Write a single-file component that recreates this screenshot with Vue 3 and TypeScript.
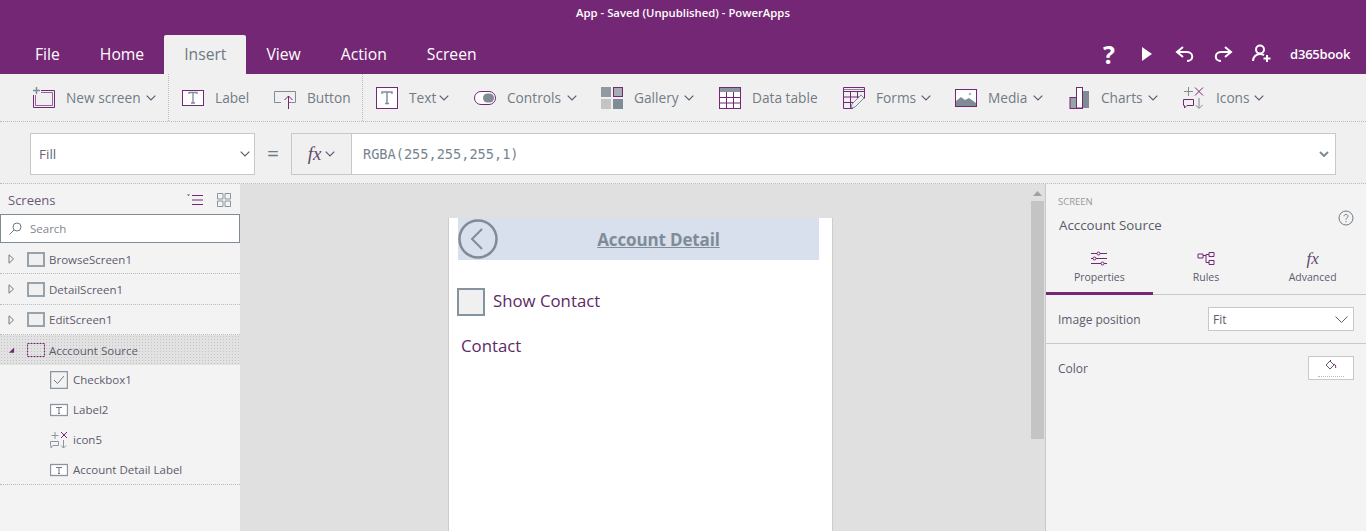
<script setup lang="ts">
interface RibbonItem {
  name: string;
  icon: string;
  w: number;
  chevron: boolean;
  gap: number;
}

const tabs = ['File', 'Home', 'Insert', 'View', 'Action', 'Screen'];

const ribbon: RibbonItem[] = [
  { name: 'New screen', icon: 'newscreen', w: 75, chevron: true, gap: 26 },
  { name: 'Label', icon: 'label', w: 35, chevron: false, gap: 24 },
  { name: 'Button', icon: 'button', w: 43, chevron: false, gap: 26 },
  { name: 'Text', icon: 'text', w: 25, chevron: true, gap: 25 },
  { name: 'Controls', icon: 'controls', w: 55, chevron: true, gap: 24 },
  { name: 'Gallery', icon: 'gallery', w: 45, chevron: true, gap: 25 },
  { name: 'Data table', icon: 'datatable', w: 66, chevron: false, gap: 25 },
  { name: 'Forms', icon: 'forms', w: 40, chevron: true, gap: 24 },
  { name: 'Media', icon: 'media', w: 40, chevron: true, gap: 25 },
  { name: 'Charts', icon: 'charts', w: 42, chevron: true, gap: 25 },
  { name: 'Icons', icon: 'icons', w: 33, chevron: true, gap: 0 },
];

const screens = ['BrowseScreen1', 'DetailScreen1', 'EditScreen1'];
const children = [
  { name: 'Checkbox1', icon: 'check' },
  { name: 'Label2', icon: 'label' },
  { name: 'icon5', icon: 'icons' },
  { name: 'Account Detail Label', icon: 'label' },
];
</script>

<template>
  <div class="app">
    <header class="top">
      <div class="title">App - Saved (Unpublished) - PowerApps</div>
      <div class="menu">
        <nav class="tabs">
          <span v-for="t in tabs" :key="t" class="tab" :class="{ active: t === 'Insert' }">{{ t }}</span>
        </nav>
        <div class="actions">
          <span class="question">?</span>
          <svg class="play" width="14" height="16" viewBox="0 0 14 16"><path d="M2 1l10 7-10 7z" fill="#fff" /></svg>
          <svg width="20" height="18" viewBox="0 0 20 18" fill="none" stroke="#fff" stroke-width="2"><path d="M8 2L2 7l6 5M2 7h10c7 0 7 9 0 9" /></svg>
          <svg width="20" height="18" viewBox="0 0 20 18" fill="none" stroke="#fff" stroke-width="2"><path d="M12 2l6 5-6 5M18 7H8c-7 0-7 9 0 9" /></svg>
          <svg width="20" height="19" viewBox="0 0 20 19" fill="none" stroke="#fff" stroke-width="2"><circle cx="9" cy="5.5" r="4" /><path d="M2 17c0-4 3-7 7-7 1.5 0 3 .5 4 1.3M16 11v7M12.5 14.5h7" /></svg>
          <span class="user">d365book</span>
        </div>
      </div>
    </header>

    <div class="ribbon">
      <div
        v-for="item in ribbon"
        :key="item.name"
        class="rb-item"
        :class="{ split: item.name === 'New screen' || item.name === 'Button' }"
        :style="{ marginRight: item.gap + 'px' }"
      >
        <svg class="rb-icon" width="22" height="22" viewBox="0 0 22 22" fill="none" stroke="#742774" stroke-width="1">
          <template v-if="item.icon === 'newscreen'">
            <path d="M8 3.5h13.5v17H.5V8" />
            <path d="M8 5.500h11.500v13h-17V8" stroke-opacity=".7" />
            <path d="M3.500 0v7M0 3.500h7" stroke="#7f8c96" stroke-width="1.500" />
          </template>
          <template v-else-if="item.icon === 'label'">
            <rect x=".5" y="3.5" width="21" height="15" fill="#fff" />
            <path d="M7 7V5.500h8V7M11 6v10M9 16h4" stroke="#7f8c96" stroke-width="1.300" />
          </template>
          <template v-else-if="item.icon === 'button'">
            <path d="M7 15.500H.5v-11h21v11H15" stroke="#7f8c96" />
            <path d="M14.500 22V9M10.500 13l4-4 4 4" />
          </template>
          <template v-else-if="item.icon === 'text'">
            <rect x=".5" y=".5" width="21" height="21" fill="#fff" />
            <path d="M6 7V5h10v2M11 5v11M9 16.500h4" stroke="#7f8c96" stroke-width="1.400" />
          </template>
          <template v-else-if="item.icon === 'controls'">
            <rect x=".5" y="4.500" width="21" height="13" rx="6.500" fill="#fff" />
            <rect x="9" y="6.500" width="11" height="9" rx="4.500" fill="#7f8c96" stroke="none" />
          </template>
          <template v-else-if="item.icon === 'gallery'">
            <rect x="0" y="0" width="10" height="10" fill="#8f9aa2" stroke="none" />
            <rect x="12.500" y=".5" width="9" height="9" fill="#a6adb2" />
            <rect x="0" y="12" width="10" height="10" fill="#c4c4c4" stroke="none" />
            <rect x="12" y="12" width="10" height="10" fill="#7f8c96" stroke="none" />
          </template>
          <template v-else-if="item.icon === 'datatable'">
            <rect x=".5" y=".5" width="21" height="21" fill="#fff" />
            <rect x="1" y="1" width="20" height="4" fill="#8a959e" stroke="none" />
            <path d="M1 10.500h20M1 16h20M7.500 5v16M14.500 5v16" />
          </template>
          <template v-else-if="item.icon === 'forms'">
            <path d="M10 21.500H.5V.5h21v11M1 4.500h20M1 10h17M1 15.500h9M7.500 5v16M14.500 5v6" />
            <path d="M8 21l1-4L18 8l3 3-9 9zM1 2.500h20" stroke="#7f8c96" fill="#f0f0f0" />
          </template>
          <template v-else-if="item.icon === 'media'">
            <rect x=".5" y="2.500" width="21" height="17" fill="#fff" />
            <path d="M1 19v-5l5-4 4 3 4-2 7 5v3z" fill="#7f8c96" stroke="none" />
            <circle cx="15" cy="7" r="1.300" fill="#b4bbc0" stroke="none" />
          </template>
          <template v-else-if="item.icon === 'charts'">
            <rect x="2" y="10" width="6" height="11" fill="#98a2aa" stroke="none" />
            <rect x="8.500" y=".5" width="6" height="20.500" fill="#fff" />
            <rect x="15" y="4" width="6" height="17" fill="#7f8c96" stroke="none" />
            <path d="M2 21.500h13M2 10.500h6M2 10v12" />
          </template>
          <template v-else-if="item.icon === 'icons'">
            <path d="M5.500 0v9M1 4.500h9" stroke="#7f8c96" />
            <path d="M12 .5l8 8M20 .5l-8 8" />
            <path d="M.5 12.500h10v6H4l-2.500 2.500v-2.500h-1z" />
            <path d="M16 11v10M12.500 18l3.500 3.500 3.500-3.500" stroke="#7f8c96" />
          </template>
        </svg>
        <span class="rb-text" :style="{ width: item.w + 'px' }">{{ item.name }}</span>
        <svg v-if="item.chevron" class="chev" width="10" height="6" viewBox="0 0 10 6" fill="none" stroke="#5f5a6e" stroke-width="1.200"><path d="M.7.7L5 5l4.300-4.300" /></svg>
      </div>
    </div>

    <div class="formula">
      <div class="prop">
        <span>Fill</span>
        <svg width="10" height="6" viewBox="0 0 10 6" fill="none" stroke="#5f5a6e" stroke-width="1.200"><path d="M.7.7L5 5l4.300-4.300" /></svg>
      </div>
      <span class="equals">=</span>
      <div class="fx-box">
        <div class="fx"><i>fx</i><svg width="10" height="6" viewBox="0 0 10 6" fill="none" stroke="#5f5a6e" stroke-width="1.200"><path d="M.7.7L5 5l4.300-4.300" /></svg></div>
        <div class="expr">
          <span>RGBA(255,255,255,1)</span>
          <svg width="10" height="6" viewBox="0 0 10 6" fill="none" stroke="#7f8c96" stroke-width="2"><path d="M1 1l4 4 4-4" /></svg>
        </div>
      </div>
    </div>

    <main class="body">
      <aside class="left">
        <div class="left-head">
          <span>Screens</span>
          <div class="left-tools">
            <svg width="16" height="12" viewBox="0 0 16 12" fill="none" stroke="#742774"><path d="M5 1.500h11M5 6h11M5 10.500h11" /><path d="M0 .5h3L1.500 2z" fill="#742774" stroke="none" /></svg>
            <svg width="14" height="14" viewBox="0 0 14 14" fill="none" stroke="#8a959e"><path d="M.5.500h5.500v5.500H.5zM8 .5h5.500v5.500H8zM.5 8h5.500v5.500H.5zM8 8h5.500v5.500H8z" /></svg>
          </div>
        </div>
        <div class="search">
          <svg width="13" height="13" viewBox="0 0 13 13" fill="none" stroke="#6f7a84"><circle cx="8" cy="5" r="4" /><path d="M5 8l-4.500 4.500" /></svg>
          <span>Search</span>
        </div>
        <div v-for="s in screens" :key="s" class="row">
          <svg class="tri" width="6" height="10" viewBox="0 0 6 10" fill="none" stroke="#6f7a84"><path d="M.5.800L5 5 .5 9.200z" /></svg>
          <svg width="18" height="15" viewBox="0 0 18 15" fill="#f0f0f0" stroke="#98a2aa" stroke-width="2"><rect x="1" y="1" width="16" height="13" /></svg>
          <span>{{ s }}</span>
        </div>
        <div class="row selected">
          <svg class="tri" width="8" height="8" viewBox="0 0 8 8"><path d="M7 1v6H1z" fill="#742774" /></svg>
          <svg width="18" height="14" viewBox="0 0 18 14" fill="none" stroke="#742774"><rect x=".5" y=".5" width="17" height="13" stroke-dasharray="2 1" /></svg>
          <span>Acccount Source</span>
        </div>
        <div class="kids">
          <div v-for="c in children" :key="c.name" class="kid">
            <svg width="18" height="18" viewBox="0 0 18 18" fill="none" stroke="#8a959e">
              <template v-if="c.icon === 'check'">
                <rect x=".5" y=".5" width="17" height="17" stroke-width="1.500" />
                <path d="M4 9l3.500 3.500L14 5" stroke="#6f7a84" />
              </template>
              <template v-else-if="c.icon === 'label'">
                <rect x=".5" y="3.500" width="17" height="11" stroke-width="1.300" fill="#fff" />
                <path d="M6 6.500h6M9 6.500v6M8 12.500h2" stroke="#6f7a84" />
              </template>
              <template v-else>
                <path d="M5 1v7M1.500 4.500h7" />
                <path d="M11 1l6 6M17 1l-6 6" stroke="#742774" />
                <path d="M.5 10.500h8v4H3L1 17v-2.500H.5z" />
                <path d="M13.500 9v8M11 14.500l2.500 2.500 2.500-2.500" />
              </template>
            </svg>
            <span>{{ c.name }}</span>
          </div>
        </div>
      </aside>

      <section class="canvas">
        <div class="phone">
          <div class="phone-head">
            <svg width="40" height="40" viewBox="0 0 40 40" fill="none" stroke="#7f8c96" stroke-width="2.500"><circle cx="20" cy="20" r="18.500" /><path d="M24 10l-10 10 10 10" stroke-width="2" /></svg>
            <span class="phone-title">Account Detail</span>
          </div>
          <div class="check-row">
            <span class="box"></span>
            <span class="check-text">Show Contact</span>
          </div>
          <div class="contact">Contact</div>
        </div>
      </section>

      <div class="vscroll">
        <svg width="9" height="5" viewBox="0 0 9 5"><path d="M4.500 0L9 5H0z" fill="#9aa3aa" /></svg>
        <div class="thumb"></div>
      </div>

      <aside class="right">
        <div class="r-head">
          <div class="r-kicker">SCREEN</div>
          <div class="r-name-row">
            <span class="r-name">Acccount Source</span>
            <svg width="16" height="16" viewBox="0 0 16 16" fill="none" stroke="#6f7a84"><circle cx="8" cy="8" r="7" /><path d="M6 6.300C6 3.800 10 3.800 10 6.200 10 7.800 8 7.800 8 9.700" /><path d="M8 11v1.200" /></svg>
          </div>
        </div>
        <div class="r-tabs">
          <div class="r-tab on">
            <svg width="18" height="14" viewBox="0 0 18 14" fill="none" stroke="#742774"><path d="M1 2h6M10 2h7M1 7h2M6 7h11M1 12h10M14 12h3" /><circle cx="8.500" cy="2" r="1.500" /><circle cx="4.500" cy="7" r="1.500" /><circle cx="12.500" cy="12" r="1.500" /></svg>
            <span>Properties</span>
          </div>
          <div class="r-tab">
            <svg width="18" height="14" viewBox="0 0 18 14" fill="none" stroke="#742774"><path d="M1 2.500h5v4H1zM12 1h5v4h-5zM12 9h5v4h-5zM6 4h3M12 3H9v8h3" /></svg>
            <span>Rules</span>
          </div>
          <div class="r-tab">
            <i class="r-fx">fx</i>
            <span>Advanced</span>
          </div>
        </div>
        <div class="r-row image">
          <span>Image position</span>
          <div class="r-select">
            <span>Fit</span>
            <svg width="13" height="7" viewBox="0 0 13 7" fill="none" stroke="#5f5a6e"><path d="M.5.500l6 6 6-6" /></svg>
          </div>
        </div>
        <div class="r-row color">
          <span>Color</span>
          <div class="swatch">
            <svg width="12" height="11" viewBox="0 0 12 11" fill="none" stroke="#5f5a6e"><path d="M5 1L1 5l4 4 4-4z" /><path d="M5 1l1-1M9 4c2 1 2 3 1.500 4" stroke="#742774" /></svg>
            <div class="swatch-line"></div>
          </div>
        </div>
      </aside>
    </main>
  </div>
</template>

<style scoped>
.app {
  width: 1366px;
  height: 531px;
  overflow: hidden;
  display: flex;
  flex-direction: column;
  background: #f0f0f0;
  font-family: "Open Sans", "Noto Sans", sans-serif;
}

.top {
  height: 74px;
  background: #742774;
  color: #fff;
  flex: none;
}
.title {
  height: 35px;
  padding-top: 5px;
  box-sizing: border-box;
  text-align: center;
  font-size: 11.3px;
  font-weight: 600;
  line-height: 16px;
}
.menu {
  height: 39px;
  display: flex;
  justify-content: space-between;
}
.tabs {
  display: flex;
  padding-left: 15px;
}
.tab {
  padding: 0 20px;
  font-size: 15.7px;
  line-height: 39px;
}
.tab.active {
  background: #f0f0f0;
  color: #6f7a84;
  border-radius: 2px 2px 0 0;
}
.actions {
  display: flex;
  align-items: center;
  gap: 18px;
  padding: 0 15px 2px 0;
}
.question {
  font-size: 25px;
  font-weight: 700;
  line-height: 24px;
  width: 12px;
  margin-right: 7px;
}
.play {
  margin-right: 3px;
}
.user {
  font-size: 13px;
  font-weight: 600;
  letter-spacing: -0.2px;
  width: 61px;
  white-space: nowrap;
  margin-left: 1px;
}

.ribbon {
  height: 48px;
  flex: none;
  box-sizing: border-box;
  border-bottom: 1px dotted #bbb;
  display: flex;
  align-items: stretch;
  padding-left: 33px;
}
.rb-item {
  display: flex;
  align-items: center;
  font-size: 13.7px;
  color: #717c87;
}
.rb-item.split {
  position: relative;
}
.rb-item.split::after {
  content: "";
  position: absolute;
  right: -13px;
  top: 0;
  bottom: 0;
  border-right: 1px dotted #bbb;
}
.rb-icon {
  overflow: visible;
  margin-right: 11px;
}
.rb-text {
  white-space: nowrap;
}
.chev {
  margin-left: 5px;
}

.formula {
  height: 62px;
  flex: none;
  box-sizing: border-box;
  padding: 11px 30px 8px;
  border-bottom: 1px dotted #bbb;
  display: flex;
  align-items: stretch;
}
.prop {
  width: 225px;
  box-sizing: border-box;
  background: #fff;
  border: 1px solid #c8c8c8;
  padding: 0 4px 0 8px;
  display: flex;
  align-items: center;
  justify-content: space-between;
  font-size: 13.5px;
  color: #667;
}
.equals {
  width: 36px;
  text-align: center;
  font-size: 21px;
  color: #6f7a84;
  line-height: 40px;
}
.fx-box {
  flex: 1;
  display: flex;
  border: 1px solid #c8c8c8;
}
.fx {
  width: 60px;
  box-sizing: border-box;
  border-right: 1px solid #c8c8c8;
  display: flex;
  align-items: center;
  justify-content: center;
  gap: 4px;
}
.fx i, .r-fx {
  font-family: "Liberation Serif", serif;
  font-size: 19px;
  color: #5f4a6e;
}
.expr {
  flex: 1;
  background: #fff;
  display: flex;
  align-items: center;
  justify-content: space-between;
  padding: 0 6px 0 11px;
  font-family: "DejaVu Sans Mono", monospace;
  font-size: 13.6px;
  color: #778490;
}

.body {
  flex: 1;
  min-height: 0;
  display: flex;
}
.left {
  width: 240px;
  flex: none;
  background: #f3f3f3;
}
.left-head {
  height: 30px;
  display: flex;
  align-items: center;
  justify-content: space-between;
  padding: 2px 9px 0 8px;
  box-sizing: border-box;
  font-size: 13px;
  color: #6b5a78;
}
.left-tools {
  display: flex;
  align-items: center;
  gap: 14px;
}
.search {
  height: 29px;
  margin-bottom: 1px;
  box-sizing: border-box;
  background: #fff;
  border: 1px solid #7f8c96;
  display: flex;
  align-items: center;
  gap: 8px;
  padding-left: 8px;
  font-size: 11.5px;
  color: #7f8890;
}
.row {
  height: 30.3px;
  padding-top: 1px;
  box-sizing: border-box;
  border-bottom: 1px dotted #bbb;
  display: flex;
  align-items: center;
  font-size: 11.5px;
  color: #5f5a6e;
}
.row .tri {
  margin: 0 12px 0 8px;
  width: 7px;
}
.row span {
  margin-left: 4px;
}
.row.selected {
  height: 30px;
  background-color: #e2e2e2;
  background-image: radial-gradient(#c4c4c4 0.7px, transparent 0.8px);
  background-size: 3px 3px;
  border-bottom: none;
}
.kids {
  height: 120px;
  box-sizing: border-box;
  border-bottom: 1px dotted #bbb;
}
.kid {
  height: 30px;
  display: flex;
  align-items: center;
  gap: 5px;
  padding-left: 50px;
  font-size: 11.5px;
  color: #5f5a6e;
}

.canvas {
  width: 790px;
  flex: none;
  background: #e0e0e0;
  padding: 34px 0 0 208px;
  box-sizing: border-box;
}
.phone {
  width: 385px;
  height: 320px;
  box-sizing: border-box;
  background: #fff;
  border-left: 1px solid #ccc;
  border-right: 1px solid #ccc;
  padding-left: 9px;
}
.phone-head {
  width: 361px;
  height: 42px;
  background: #d8dfed;
  display: flex;
  align-items: center;
}
.phone-head svg {
  flex: none;
  margin-top: -1px;
}
.phone-title {
  flex: 1;
  text-align: center;
  font-size: 17px;
  font-weight: 700;
  text-decoration: underline;
  color: #7f8c96;
  letter-spacing: -0.15px;
  white-space: nowrap;
}
.check-row {
  margin: 28px 0 0 -1px;
  display: flex;
  align-items: center;
  gap: 8px;
  font-size: 16.8px;
  color: #5c2a66;
}
.check-text {
  margin-bottom: 4px;
}
.box {
  width: 28px;
  height: 28px;
  box-sizing: border-box;
  background: #f0f0f0;
  border: 2px solid #8593a0;
}
.contact {
  margin: 15px 0 0 3px;
  font-size: 16.8px;
  line-height: 30px;
  color: #5c2a66;
}

.vscroll {
  width: 15px;
  flex: none;
  background: #e0e0e0;
  display: flex;
  flex-direction: column;
  align-items: center;
  padding-top: 7px;
  box-sizing: border-box;
}
.thumb {
  width: 13px;
  height: 238px;
  margin-top: 5px;
  background: #c4c4c4;
}

.right {
  flex: 1;
  background: #f3f3f3;
  border-left: 1px solid #c8c8c8;
  font-size: 12px;
  color: #5f5a6e;
}
.r-head {
  height: 61px;
  padding: 11px 12px 0 12px;
  box-sizing: border-box;
}
.r-kicker {
  font-size: 9.5px;
  line-height: 14px;
  color: #9a9a9a;
}
.r-name-row {
  display: flex;
  align-items: center;
  justify-content: space-between;
  margin-top: 1px;
}
.r-name {
  font-size: 13.3px;
  line-height: 22px;
  margin-left: 1px;
  margin-top: 4px;
  color: #5a5a68;
}
.r-name-row svg {
  margin-top: -10px;
}
.r-tabs {
  height: 50px;
  box-sizing: border-box;
  border-bottom: 1px solid #c8c8c8;
  display: flex;
}
.r-tab {
  width: 106.67px;
  height: 50px;
  box-sizing: border-box;
  display: flex;
  flex-direction: column;
  align-items: center;
  gap: 4px;
  padding-top: 6px;
  font-size: 10.5px;
}
.r-tab.on {
  border-bottom: 3px solid #742774;
}
.r-tab svg, .r-fx {
  height: 15px;
  line-height: 15px;
  flex: none;
}
.r-fx {
  font-size: 17px;
}
.r-row {
  display: flex;
  align-items: center;
  justify-content: space-between;
  padding: 0 12px;
  box-sizing: border-box;
}
.r-row.image {
  height: 49px;
  border-bottom: 1px solid #c8c8c8;
}
.r-select {
  width: 146px;
  height: 24px;
  box-sizing: border-box;
  background: #fff;
  border: 1px solid #c8c8c8;
  display: flex;
  align-items: center;
  justify-content: space-between;
  padding: 0 5px 0 4px;
}
.r-row.color {
  height: 48px;
}
.swatch {
  width: 46px;
  height: 24px;
  box-sizing: border-box;
  background: #fff;
  border: 1px solid #c8c8c8;
  display: flex;
  flex-direction: column;
  align-items: center;
  padding-top: 3px;
}
.swatch-line {
  width: 26px;
  margin-top: 5px;
  border-top: 1px dotted #bbb;
}
</style>
